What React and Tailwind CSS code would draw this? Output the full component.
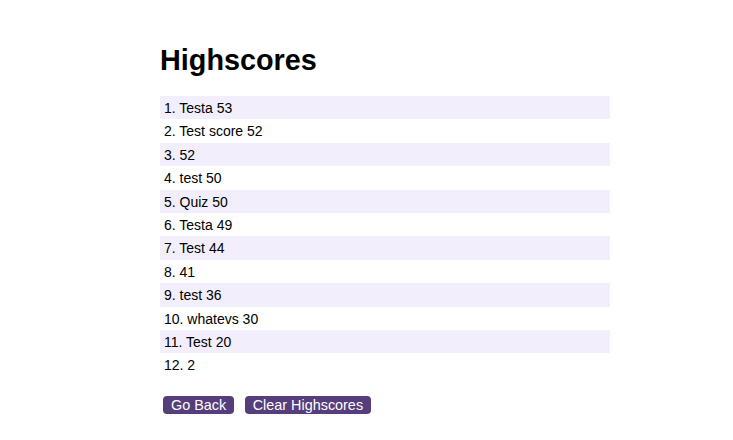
import React from "react";

const scores = [
  "Testa 53",
  "Test score 52",
  "52",
  "test 50",
  "Quiz 50",
  "Testa 49",
  "Test 44",
  "41",
  "test 36",
  "whatevs 30",
  "Test 20",
  "2",
];

const App = () => {
  return (
    <div className="min-h-screen bg-white text-black font-['Liberation_Sans',Arial,sans-serif]">
      <div className="ml-[160px] w-[450px] pt-[44px]">
        <h1 className="text-[28.8px] leading-[33px] font-bold">Highscores</h1>

        <ol className="mt-[19px]">
          {scores.map((s, i) => (
            <li
              key={i}
              className={`h-[23.4px] pl-1 pt-1 text-[14px] leading-4 ${
                i % 2 === 0 ? "bg-[#f3eefb]" : "bg-white"
              }`}
            >
              {i + 1}. {s}
            </li>
          ))}
        </ol>

        <div className="mt-[19px] flex gap-[10.5px] pl-[3px]">
          <button className="bg-[#563d7c] text-white text-[14.4px] leading-[16.5px] px-2 py-[1px] rounded-[4px]">
            Go Back
          </button>
          <button className="bg-[#563d7c] text-white text-[14.4px] leading-[16.5px] px-2 py-[1px] rounded-[4px]">
            Clear Highscores
          </button>
        </div>
      </div>
    </div>
  );
};

export default App;
